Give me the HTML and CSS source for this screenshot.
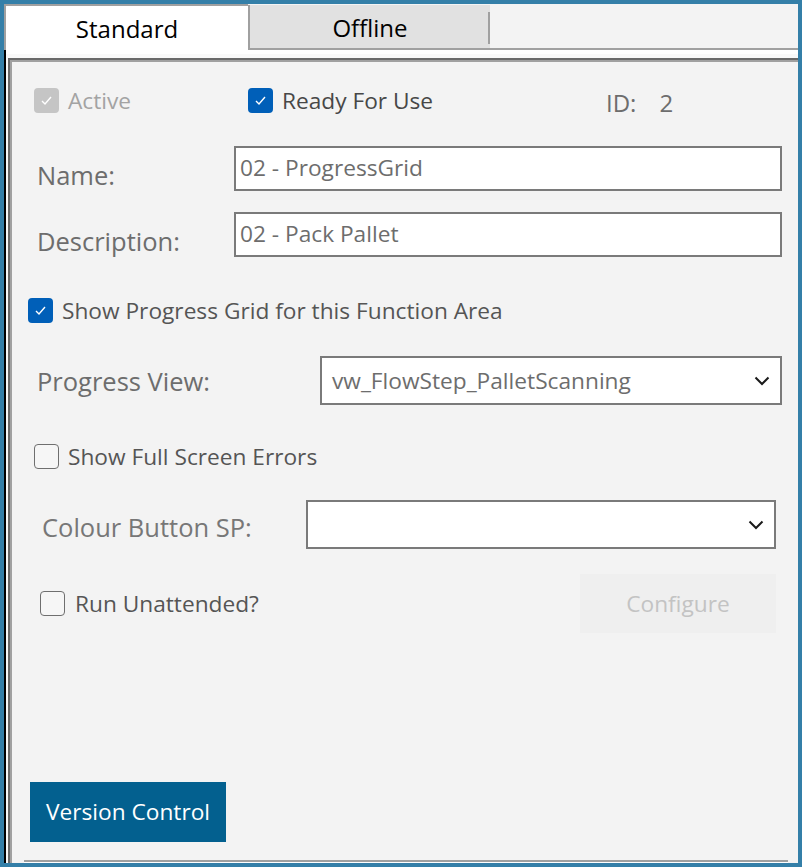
FILE: index.html
```html
<!DOCTYPE html>
<html>
<head>
<meta charset="utf-8">
<link rel="stylesheet" href="styles.css">
</head>
<body>
<div class="window">
  <div class="tabstrip">
    <div class="tab tab-active">Standard</div>
    <div class="tab tab-idle">Offline</div>
    <div class="tab-fill"></div>
  </div>
  <div class="panel">
    <div class="panel-inner">
      <div class="row row-top">
        <div class="check check-active">
          <span class="box box-disabled"><svg viewBox="0 0 25 25" width="25" height="25"><polyline points="8,13 11,16 17,9" fill="none" stroke="#fff" stroke-width="1.4"/></svg></span>
          <span class="clabel clabel-disabled">Active</span>
        </div>
        <div class="check check-ready">
          <span class="box box-checked"><svg viewBox="0 0 25 25" width="25" height="25"><polyline points="8,13 11,16 17,9" fill="none" stroke="#fff" stroke-width="1.4"/></svg></span>
          <span class="clabel clabel-dark">Ready For Use</span>
        </div>
        <div class="idpair">
          <span class="id-label">ID:</span>
          <span class="id-value">2</span>
        </div>
      </div>

      <div class="field field-name">
        <span class="flabel flabel-low">Name:</span>
        <div class="textbox">02 - ProgressGrid</div>
      </div>

      <div class="field field-desc">
        <span class="flabel flabel-low">Description:</span>
        <div class="textbox">02 - Pack Pallet</div>
      </div>

      <div class="row row-progress">
        <div class="check">
          <span class="box box-checked"><svg viewBox="0 0 25 25" width="25" height="25"><polyline points="8,13 11,16 17,9" fill="none" stroke="#fff" stroke-width="1.4"/></svg></span>
          <span class="clabel">Show Progress Grid for this Function Area</span>
        </div>
      </div>

      <div class="field field-view">
        <span class="flabel">Progress View:</span>
        <div class="combo">
          <span class="combo-text">vw_FlowStep_PalletScanning</span>
          <svg class="chev" viewBox="0 0 16 10" width="16" height="10"><polyline points="1.5,1.5 8,8 14.5,1.5" fill="none" stroke="#1a1a1a" stroke-width="2"/></svg>
        </div>
      </div>

      <div class="row row-errors">
        <div class="check">
          <span class="box box-empty"></span>
          <span class="clabel">Show Full Screen Errors</span>
        </div>
      </div>

      <div class="field field-colour">
        <span class="flabel flabel-mid">Colour Button SP:</span>
        <div class="combo">
          <span class="combo-text"></span>
          <svg class="chev" viewBox="0 0 16 10" width="16" height="10"><polyline points="1.5,1.5 8,8 14.5,1.5" fill="none" stroke="#1a1a1a" stroke-width="2"/></svg>
        </div>
      </div>

      <div class="row row-run">
        <div class="check check-run">
          <span class="box box-empty"></span>
          <span class="clabel">Run Unattended?</span>
        </div>
        <div class="btn-configure">Configure</div>
      </div>

      <div class="btn-version">Version Control</div>

      <div class="bottom-rule"></div>
    </div>
  </div>
</div>
</body>
</html>
```

FILE: styles.css
```css
* { box-sizing: border-box; }

html, body {
  margin: 0;
  padding: 0;
}

body {
  background: #347fa8;
  font-family: "Open Sans", "Noto Sans", sans-serif;
}

.window {
  width: 802px;
  height: 867px;
  padding: 4px;
  display: flex;
  flex-direction: column;
}

/* ---------- tabs ---------- */
.tabstrip {
  height: 46px;
  display: flex;
  align-items: flex-end;
  background: #f3f3f3;
}

.tab {
  display: flex;
  align-items: center;
  justify-content: center;
  font-size: 24px;
  color: #000;
}

.tab-active {
  width: 244px;
  height: 46px;
  background: #fff;
  border-top: 2px solid #a0a0a0;
  border-left: 2px solid #a0a0a0;
}

.tab-idle {
  width: 242px;
  height: 45px;
  background:
    linear-gradient(#a0a0a0, #a0a0a0) right 7px / 2px 32px no-repeat,
    #e1e1e1;
  border-left: 2px solid #a0a0a0;
  border-bottom: 2px solid #a0a0a0;
  padding-top: 1px;
}

.tab-fill {
  flex: 1;
  height: 2px;
  background: #a0a0a0;
}

/* ---------- panel ---------- */
.panel {
  flex: 1;
  display: flex;
  flex-direction: column;
  border-left: 2px solid #000;
  padding: 8px 0 0 2px;
  background: linear-gradient(#fff 4px, #f9f9f9 4px);
}

.panel-inner {
  flex: 1;
  display: flex;
  flex-direction: column;
  background: #f3f3f3;
  border-top: 2px solid #696969;
  border-left: 2px solid #696969;
  box-shadow: inset 2px 2px 0 #a0a0a0;
  padding: 2px 0 0 2px;
  font-size: 22.7px;
  line-height: 30px;
}

/* ---------- checkboxes ---------- */
.row {
  display: flex;
  align-items: center;
}

.check {
  display: flex;
  align-items: center;
  gap: 9px;
}

.box {
  width: 25px;
  height: 25px;
  border-radius: 4px;
  flex: none;
  display: block;
}

.box svg { display: block; }

.box-checked { background: #005fb8; }
.box-disabled { background: #c5c5c5; }
.box-empty {
  border: 1.5px solid #6f6f6f;
  background: #f6f6f6;
}

.clabel { color: #555; white-space: nowrap; }
.clabel-dark { color: #474747; }
.clabel-disabled { color: #a3a3a3; }

.row-top {
  margin-top: 26px;
  height: 25px;
  padding-left: 22px;
}

.check-active { width: 214px; }
.check-ready { width: 358px; }

.idpair {
  display: flex;
  gap: 23px;
  color: #6d6d6d;
  font-size: 24px;
  padding-top: 5px;
}

/* ---------- labelled fields ---------- */
.field {
  display: grid;
  align-items: center;
}

.flabel {
  color: #6d6d6d;
  white-space: nowrap;
  font-size: 25.5px;
  line-height: 30px;
}

.flabel-low { padding-top: 13px; }
.flabel-mid { padding-top: 5px; color: #777; }

.textbox {
  height: 45px;
  background: #fff;
  border: 2px solid #7a7a7a;
  color: #6d6d6d;
  padding: 0 4px 1px;
  display: flex;
  align-items: center;
}

.field-name {
  height: 45px;
  margin-top: 33px;
  margin-left: 25px;
  grid-template-columns: 197px 548px;
}

.field-desc {
  height: 45px;
  margin-top: 21px;
  margin-left: 25px;
  grid-template-columns: 197px 548px;
}

.row-progress {
  margin-top: 41px;
  height: 25px;
  padding-left: 16px;
}

.combo {
  height: 49px;
  background: #fff;
  border: 2px solid #7a7a7a;
  display: flex;
  align-items: center;
  justify-content: space-between;
  padding: 0 10px;
  color: #6d6d6d;
}

.chev { display: block; flex: none; }

.field-view {
  height: 49px;
  margin-top: 33px;
  margin-left: 25px;
  grid-template-columns: 283px 462px;
}

.row-errors {
  margin-top: 39px;
  height: 25px;
  padding-left: 22px;
}

.field-colour {
  height: 49px;
  margin-top: 31px;
  margin-left: 30px;
  grid-template-columns: 264px 470px;
}

.row-run {
  margin-top: 25px;
  height: 59px;
  padding-left: 28px;
}

.check-run { width: 540px; gap: 10px; }

.btn-configure {
  width: 196px;
  height: 59px;
  background: #efefef;
  color: #c3c3c3;
  display: flex;
  align-items: center;
  justify-content: center;
}

.btn-version {
  margin-top: 149px;
  margin-left: 18px;
  width: 196px;
  height: 60px;
  background: #03608f;
  color: #fff;
  display: flex;
  align-items: center;
  justify-content: center;
}

.bottom-rule {
  margin-top: auto;
  margin-left: 12px;
  margin-right: 10px;
  height: 3px;
  border-top: 2px solid #a0a0a0;
  border-bottom: 1px solid #fff;
}
```
